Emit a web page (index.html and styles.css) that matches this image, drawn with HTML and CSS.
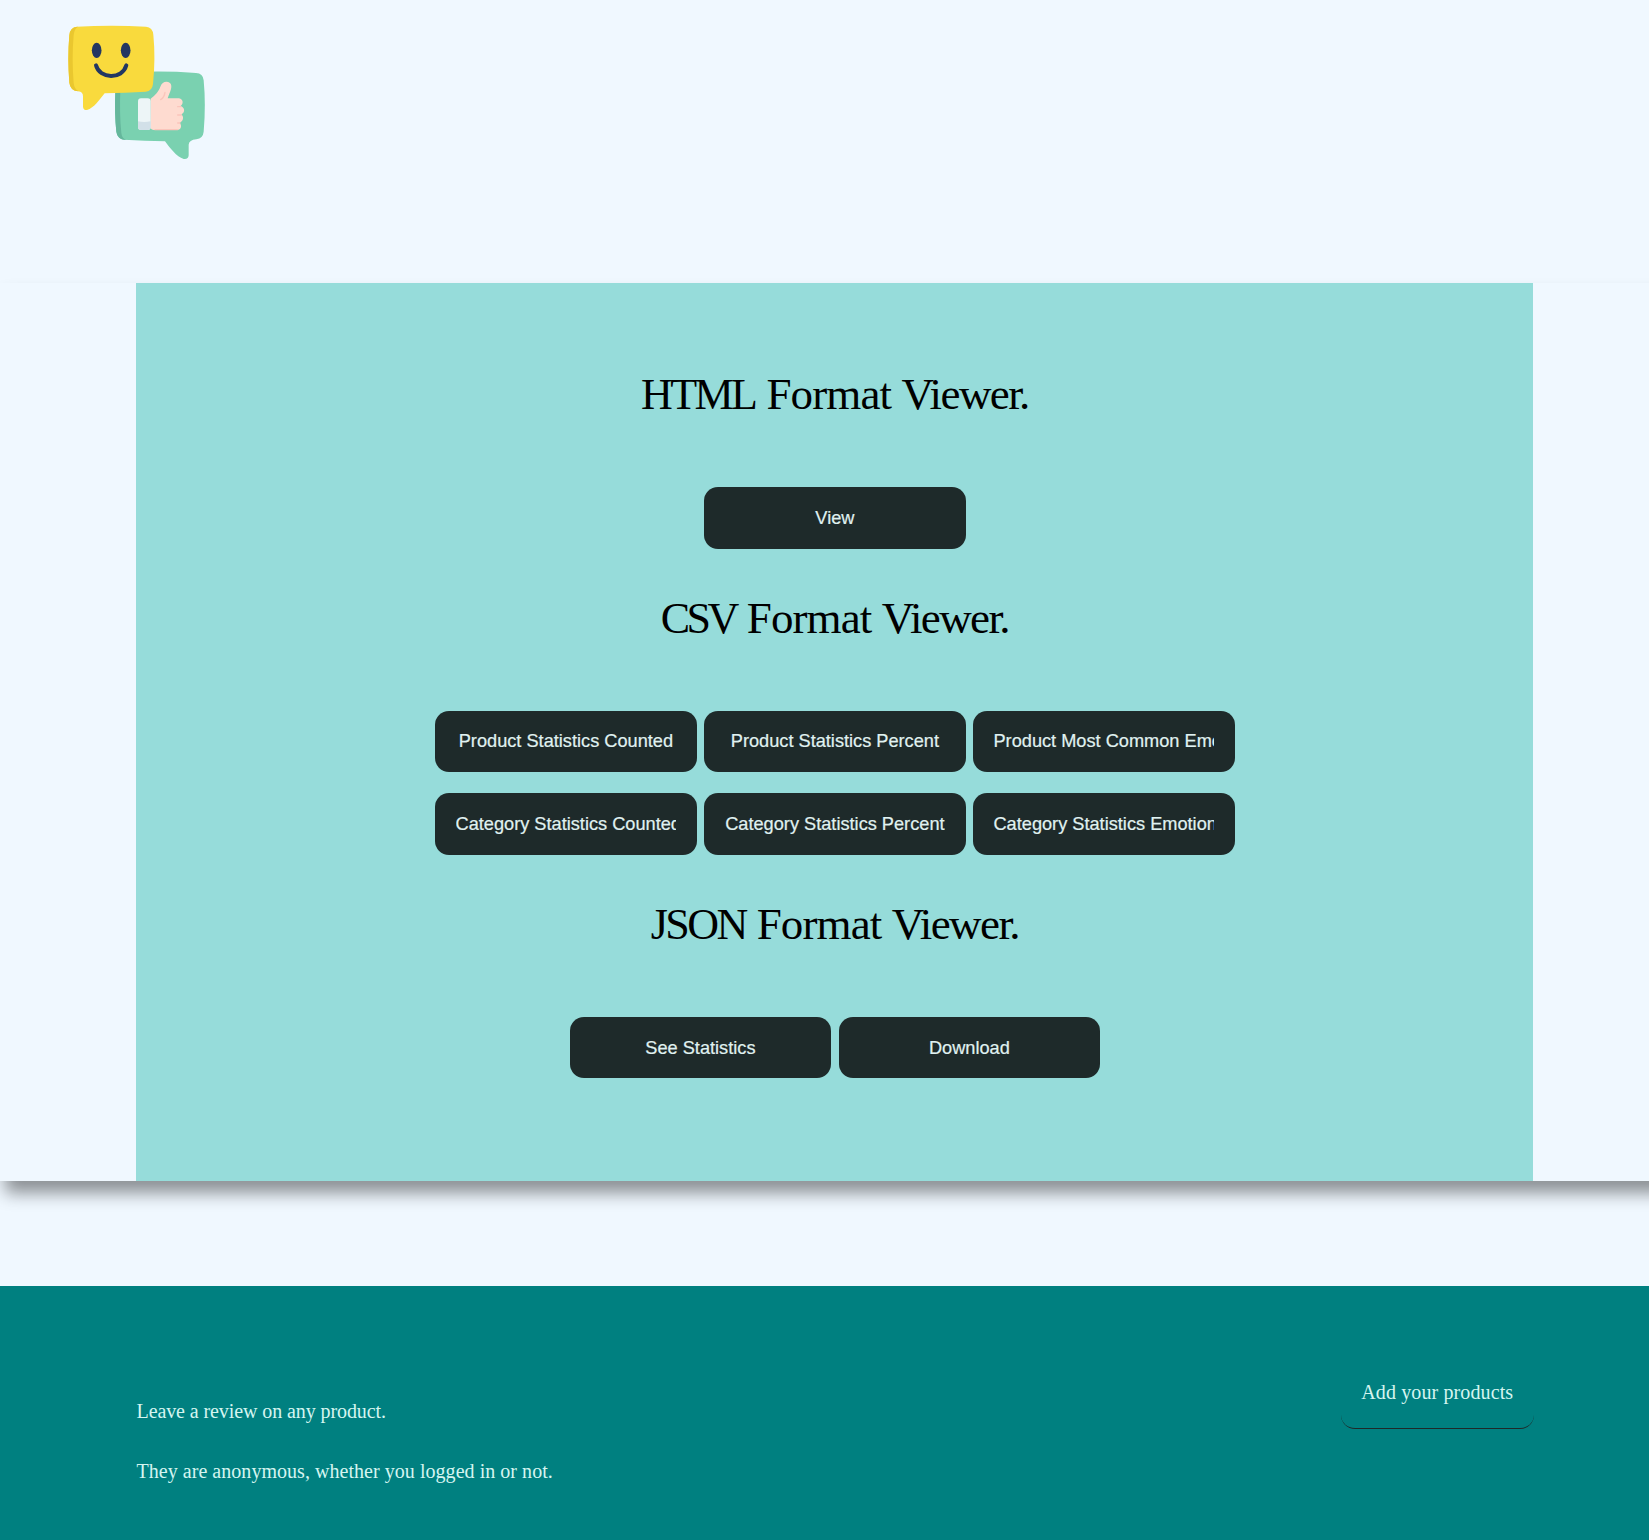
FILE: index.html
```html
<!DOCTYPE html>
<html lang="en">
<head>
<meta charset="utf-8">
<title>Format Viewer</title>
<link rel="stylesheet" href="styles.css">
</head>
<body>
<header class="header">
  <svg class="logo" viewBox="0 0 510 480" aria-hidden="true">
    <path fill="#7ad1b0" d="M224 188Q330 181 438 189Q459 190 461 211Q468 285 461 365Q459 385 439 388Q417 390 416 404V436Q415 449 401 447C379 440 361 415 345 394Q285 393 222 389Q202 387 199 365Q193 310 196 248Z"/>
    <path fill="#65b79c" d="M196 240H211Q208 310 214 369Q216 386 229 390Q202 389 199 365Q193 310 196 240Z"/>
    <path fill="#f9da3d" d="M80 50Q185 44 288 50Q308 52 310 74Q317 145 309 222Q307 243 287 245Q225 248 164 250C148 269 133 294 111 300Q100 301 99 290V259Q99 246 85 244Q61 243 58 218Q52 145 58 76Q60 52 80 50Z"/>
    <path fill="#eac72f" d="M84 50Q60 50 58 76Q52 145 58 218Q61 243 86 244Q73 238 71 219Q65 145 71 76Q73 55 84 50Z"/>
    <ellipse cx="140" cy="121" rx="14.5" ry="23" fill="#233762"/>
    <ellipse cx="227" cy="121" rx="14.5" ry="23" fill="#233762"/>
    <path d="M138 166C148 207 217 210 229 166" fill="none" stroke="#233762" stroke-width="12" stroke-linecap="round"/>
    <path fill="#fedbd0" d="M302 266C317 254 325 246 331 230C336 215 350 211 360 219C370 229 359 247 353 265H387C400 267 401 282 392 288C405 292 406 308 394 313C402 320 401 334 389 338C397 347 393 359 382 360H312Q303 360 301 352Z"/>
    <path fill="none" stroke="#fac5bb" stroke-width="4" stroke-linecap="round" d="M345 247Q343 262 332 269M383 290H392M383 315H394M383 339H390M315 359H382"/>
    <rect x="264" y="265" width="38" height="95" rx="9" fill="#edf5f7"/>
    <path fill="#d2e0e8" d="M264 334Q282 338 302 334V352Q302 360 293 360H273Q264 360 264 351Z"/>
  </svg>
</header>
<main class="main">
  <section class="panel">
    <h1 class="title title-html"><span class="kind">HTML</span> <span class="format">Format</span> Viewer.</h1>
    <div class="row"><button class="button"><span class="label">View</span></button></div>
    <h1 class="title title-csv"><span class="kind">CSV</span> <span class="format">Format</span> Viewer.</h1>
    <div class="row">
      <button class="button"><span class="label">Product Statistics Counted</span></button>
      <button class="button"><span class="label">Product Statistics Percent</span></button>
      <button class="button"><span class="label">Product Most Common Emotion</span></button>
      <button class="button"><span class="label">Category Statistics Counted</span></button>
      <button class="button"><span class="label">Category Statistics Percent</span></button>
      <button class="button"><span class="label">Category Statistics Emotion</span></button>
    </div>
    <h1 class="title title-json"><span class="kind">JSON</span> <span class="format">Format</span> Viewer.</h1>
    <div class="row">
      <button class="button"><span class="label">See Statistics</span></button>
      <button class="button"><span class="label">Download</span></button>
    </div>
  </section>
</main>
<footer class="footer">
  <div class="notes">
    <p class="note note-review">Leave a review on any product.</p>
    <p class="note note-privacy">They are anonymous, whether you logged in or not.</p>
  </div>
  <a class="add">Add your products</a>
</footer>
</body>
</html>
```
FILE: styles.css
```css
* { box-sizing: border-box; }
body {
  margin: 0;
  height: 1540px;
  overflow: hidden;
  display: flex;
  flex-direction: column;
  background: #f0f8ff;
  font-family: "Liberation Serif", serif;
}
.header { height: 283.4px; padding: 10px 50px; flex: none; }
.logo { display: block; width: 170px; height: 160px; }
.main {
  flex: none;
  height: 898.1px;
  margin-right: -40px;
  padding: 0 155.5px 0 136.3px;
  background: #f0f8ff;
  box-shadow: 4px 13px 16px -1px rgba(0, 0, 0, .42);
}
.panel {
  width: 1397.2px;
  height: 100%;
  padding-top: 81px;
  background: #96dcda;
}
.title {
  margin: 0;
  height: 122.5px;
  line-height: 61px;
  text-align: center;
  font-size: 45px;
  font-weight: 400;
  letter-spacing: -1.6px;
  word-spacing: 1.5px;
  color: #000;
}
.title-csv, .title-json { margin-top: 39.5px; }
.kind { font-size: 44px; letter-spacing: -2.6px; }
.title-csv .kind { letter-spacing: -3.6px; }
.format { letter-spacing: -.9px; }
.row {
  width: 830px;
  margin: 0 auto;
  display: flex;
  flex-wrap: wrap;
  justify-content: center;
  gap: 20.8px 7.4px;
}
.button {
  width: 261.6px;
  height: 61.7px;
  padding: 0 20.4px;
  border: 0;
  border-radius: 14px;
  background: #1e2a2a;
  color: #e0f2f1;
  font: 18.2px/24px "Liberation Sans", Arial, sans-serif;
  -webkit-text-stroke: .2px #e0f2f1;
}
.label {
  display: block;
  overflow: hidden;
  white-space: nowrap;
  text-align: center;
}
.footer {
  flex: none;
  height: 254px;
  margin-top: 104.5px;
  padding: 84px 115.5px 0 136.5px;
  display: flex;
  justify-content: space-between;
  align-items: flex-start;
  background: #008080;
  color: #d5f5f0;
  font-size: 20px;
}
.notes { padding-top: 26px; }
.note { margin: 0 0 30px; line-height: 30px; }
.note-review { letter-spacing: -.09px; }
.note-privacy { letter-spacing: .04px; }
.add {
  width: 192.5px;
  height: 59px;
  text-align: center;
  line-height: 45px;
  letter-spacing: .12px;
  border-bottom: 1.5px solid #1e2a2a;
  border-radius: 14px;
}
```
